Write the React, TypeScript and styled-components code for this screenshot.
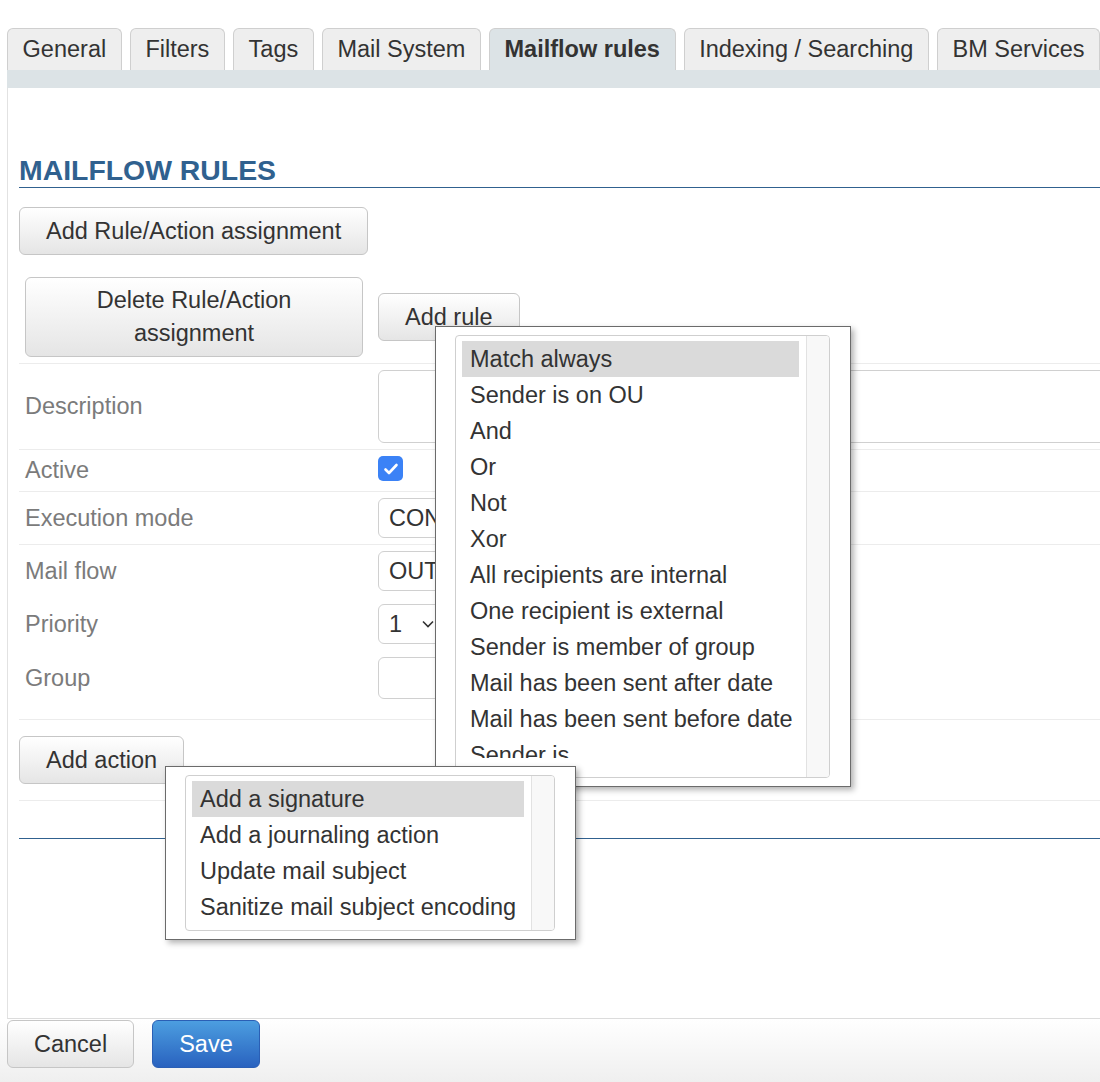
import React from 'react';
import styled, { createGlobalStyle } from 'styled-components';

const GlobalStyle = createGlobalStyle`
  html, body {
    margin: 0;
    padding: 0;
    background: #fff;
  }
  body {
    font-family: "Liberation Sans", Arial, Helvetica, sans-serif;
    color: #333;
  }
`;

const Page = styled.div`
  position: relative;
  width: 1100px;
  height: 1082px;
  overflow: hidden;
  display: flex;
  flex-direction: column;
  font-size: 23.5px;
`;

const TabBar = styled.div`
  display: flex;
  gap: 8px;
  height: 70px;
  padding: 28px 0 0 7px;
  box-sizing: border-box;
`;

const Tab = styled.div<{ active?: boolean }>`
  flex-shrink: 0;
  display: flex;
  align-items: center;
  height: 42px;
  box-sizing: border-box;
  padding: 0 14.6px;
  border: 1px solid #cfcfcf;
  border-bottom: none;
  border-radius: 6px 6px 0 0;
  background: ${p => (p.active ? '#dce3e6' : '#eeeeee')};
  font-weight: ${p => (p.active ? 700 : 400)};
  color: #333;
  white-space: nowrap;
`;

const TabBand = styled.div`
  height: 18px;
  margin-left: 7px;
  background: #dce3e6;
`;

const Panel = styled.div`
  flex: 1;
  margin: 0 -20px 0 7px;
  padding-left: 11px;
  border-left: 1px solid #e2e2e2;
  border-bottom: 1px solid #dcdcdc;
`;

const Heading = styled.h2`
  margin: 65px 0 0;
  font-size: 28.4px;
  font-weight: 700;
  line-height: 34px;
  color: #30618f;
  border-bottom: 1px solid #30618f;
`;

const Button = styled.button<{ primary?: boolean }>`
  height: 48px;
  padding: 0 26px;
  box-sizing: border-box;
  font-family: inherit;
  font-size: 23.5px;
  color: ${p => (p.primary ? '#fff' : '#333')};
  border: 1px solid ${p => (p.primary ? '#2a5fb5' : '#c6c6c6')};
  border-radius: 6px;
  background: ${p =>
    p.primary
      ? 'linear-gradient(#4c9ee0, #2962bf)'
      : 'linear-gradient(#ffffff, #e5e5e5)'};
  white-space: nowrap;
  cursor: pointer;
`;

const AssignButton = styled(Button)`
  margin-top: 19px;
`;

const DeleteButton = styled(Button)`
  width: 338px;
  height: 80px;
  padding: 0 20px;
  line-height: 33px;
  white-space: normal;
`;

const Form = styled.div`
  margin-top: 15px;
`;

const Row = styled.div<{ divided?: boolean }>`
  display: grid;
  grid-template-columns: 359px 1fr;
  align-items: center;
  border-top: 1px solid ${p => (p.divided ? '#ececec' : 'transparent')};
`;

const LabelCell = styled.div`
  padding: 6px;
  line-height: 29px;
  color: #7b7b7b;
`;

const ValueCell = styled.div`
  display: flex;
  align-items: center;
  padding: 6px 0;
`;

const TextArea = styled.textarea`
  width: 100%;
  height: 73px;
  box-sizing: border-box;
  border: 1px solid #d0d0d0;
  border-radius: 6px;
  resize: none;
  font: inherit;
`;

const Checkbox = styled.span`
  display: inline-flex;
  align-items: center;
  justify-content: center;
  width: 25px;
  height: 25px;
  margin-top: -4px;
  border-radius: 5px;
  background: #3b82f6;
`;

const Select = styled.div<{ width: number }>`
  display: flex;
  align-items: center;
  justify-content: space-between;
  width: ${p => p.width}px;
  height: 40px;
  box-sizing: border-box;
  padding: 0 10px;
  border: 1px solid #d0d0d0;
  border-radius: 6px;
  color: #333;
  white-space: nowrap;
  overflow: hidden;
`;

const Input = styled.div`
  width: 300px;
  height: 42px;
  box-sizing: border-box;
  border: 1px solid #d0d0d0;
  border-radius: 6px;
`;

const ActionSection = styled.div`
  margin-top: 14px;
  padding: 16px 0;
  border-top: 1px solid #ececec;
  border-bottom: 1px solid #ececec;
`;

const BlueRule = styled.div`
  margin-top: 37px;
  border-top: 1px solid #30618f;
`;

const Footer = styled.div`
  display: flex;
  align-items: flex-start;
  gap: 18px;
  height: 63px;
  box-sizing: border-box;
  padding: 1px 0 0 7px;
  background: linear-gradient(#ffffff, #efefef);
`;

const Popup = styled.div<{ left: number; top: number; width: number }>`
  position: absolute;
  left: ${p => p.left}px;
  top: ${p => p.top}px;
  width: ${p => p.width}px;
  box-sizing: border-box;
  padding: 8px 20px 8px 19px;
  background: #fff;
  border: 1px solid #6b6b6b;
  box-shadow: 3px 3px 6px rgba(0, 0, 0, 0.3);
`;

const ListBox = styled.div`
  display: flex;
  border: 1px solid #cfcfcf;
  border-radius: 4px;
  overflow: hidden;
`;

const ListScroll = styled.div<{ padBottom: number }>`
  flex: 1;
  padding: 5px 7px ${p => p.padBottom}px 6px;
`;

const Viewport = styled.div<{ height: number }>`
  height: ${p => p.height}px;
  overflow: hidden;
`;

const Option = styled.div<{ selected?: boolean }>`
  height: 36px;
  line-height: 36px;
  padding-left: 8px;
  background: ${p => (p.selected ? '#dadada' : 'transparent')};
  color: #333;
  white-space: nowrap;
`;

const Track = styled.div`
  width: 22px;
  background: #f8f8f8;
  border-left: 1px solid #e2e2e2;
`;

const tabs = [
  'General',
  'Filters',
  'Tags',
  'Mail System',
  'Mailflow rules',
  'Indexing / Searching',
  'BM Services',
];

const rules = [
  'Match always',
  'Sender is on OU',
  'And',
  'Or',
  'Not',
  'Xor',
  'All recipients are internal',
  'One recipient is external',
  'Sender is member of group',
  'Mail has been sent after date',
  'Mail has been sent before date',
  'Sender is',
];

const actions = [
  'Add a signature',
  'Add a journaling action',
  'Update mail subject',
  'Sanitize mail subject encoding',
];

const Chevron = () => (
  <svg width="14" height="14" viewBox="0 0 14 14" fill="none">
    <path d="M2 4.5l5 5 5-5" stroke="#333" strokeWidth="1.6" />
  </svg>
);

const App: React.FC = () => {
  return (
    <Page>
      <GlobalStyle />
      <TabBar>
        {tabs.map(t => (
          <Tab key={t} active={t === 'Mailflow rules'}>
            {t}
          </Tab>
        ))}
      </TabBar>
      <TabBand />

      <Panel>
        <Heading>MAILFLOW RULES</Heading>
        <AssignButton>Add Rule/Action assignment</AssignButton>

        <Form>
          <Row>
            <LabelCell>
              <DeleteButton>Delete Rule/Action assignment</DeleteButton>
            </LabelCell>
            <ValueCell>
              <Button>Add rule</Button>
            </ValueCell>
          </Row>
          <Row divided>
            <LabelCell>Description</LabelCell>
            <ValueCell>
              <TextArea />
            </ValueCell>
          </Row>
          <Row divided>
            <LabelCell>Active</LabelCell>
            <ValueCell>
              <Checkbox>
                <svg width="18" height="18" viewBox="0 0 18 18" fill="none">
                  <path
                    d="M3.5 9.5l3.5 3.5 7.5-8"
                    stroke="#fff"
                    strokeWidth="2.6"
                    strokeLinecap="round"
                    strokeLinejoin="round"
                  />
                </svg>
              </Checkbox>
            </ValueCell>
          </Row>
          <Row divided>
            <LabelCell>Execution mode</LabelCell>
            <ValueCell>
              <Select width={220}>CONTINUE</Select>
            </ValueCell>
          </Row>
          <Row divided>
            <LabelCell>Mail flow</LabelCell>
            <ValueCell>
              <Select width={220}>OUTGOING</Select>
            </ValueCell>
          </Row>
          <Row>
            <LabelCell>Priority</LabelCell>
            <ValueCell>
              <Select width={68}>
                1
                <Chevron />
              </Select>
            </ValueCell>
          </Row>
          <Row>
            <LabelCell>Group</LabelCell>
            <ValueCell>
              <Input />
            </ValueCell>
          </Row>
        </Form>

        <ActionSection>
          <Button>Add action</Button>
        </ActionSection>
        <BlueRule />
      </Panel>

      <Footer>
        <Button>Cancel</Button>
        <Button primary>Save</Button>
      </Footer>

      <Popup left={435} top={326} width={416}>
        <ListBox>
          <ListScroll padBottom={19}>
            <Viewport height={417}>
              {rules.map((r, i) => (
                <Option key={r} selected={i === 0}>
                  {r}
                </Option>
              ))}
            </Viewport>
          </ListScroll>
          <Track />
        </ListBox>
      </Popup>

      <Popup left={165} top={766} width={411}>
        <ListBox>
          <ListScroll padBottom={5}>
            <Viewport height={144}>
              {actions.map((a, i) => (
                <Option key={a} selected={i === 0}>
                  {a}
                </Option>
              ))}
            </Viewport>
          </ListScroll>
          <Track />
        </ListBox>
      </Popup>
    </Page>
  );
};

export default App;
